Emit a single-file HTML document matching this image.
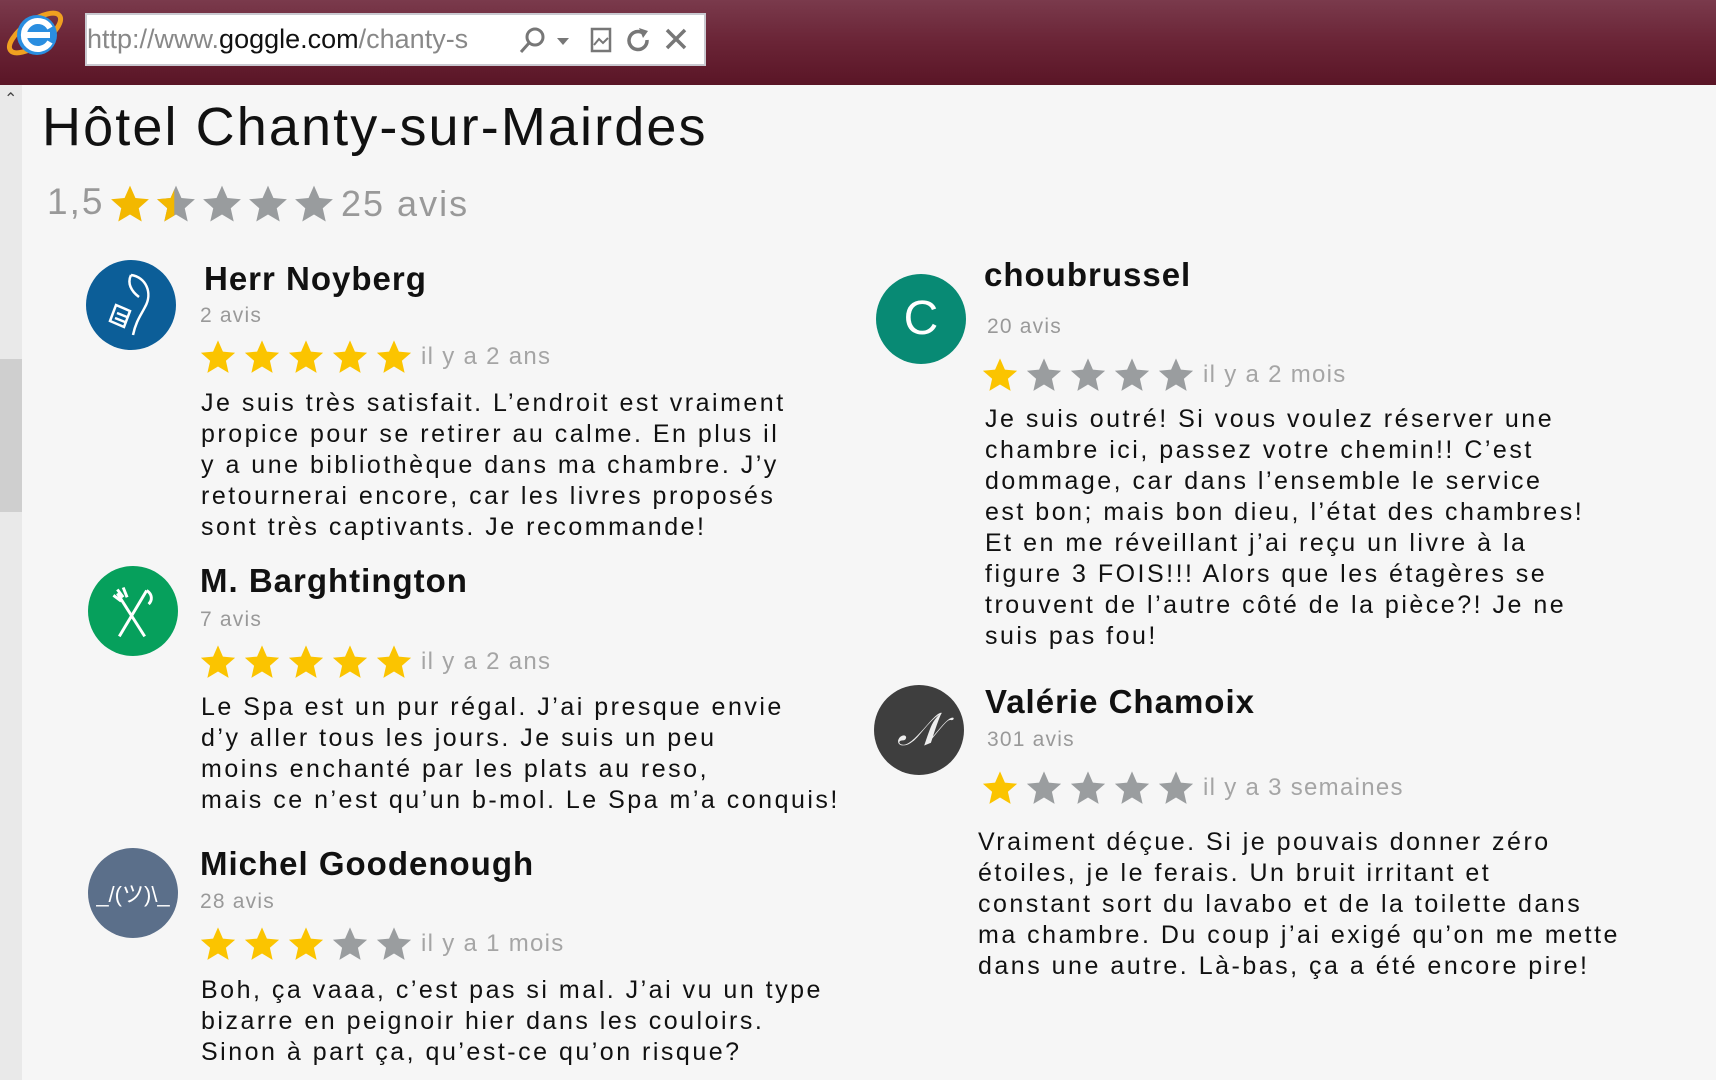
<!DOCTYPE html>
<html><head><meta charset="utf-8"><style>
*{margin:0;padding:0;box-sizing:border-box}
body{width:1716px;height:1080px;overflow:hidden;background:#f6f6f6;font-family:"Liberation Sans",sans-serif;position:relative}
.top{position:absolute;left:0;top:0;width:1716px;height:85px;background:linear-gradient(180deg,#7a3a4c 0%,#6a2436 50%,#5a1526 100%)}
.addr{position:absolute;left:85px;top:13px;width:621px;height:53px;background:#fff;border:2px solid #c9c9d0;font-size:27px;line-height:49px;color:#888;padding-left:0;white-space:nowrap;overflow:hidden}
.addr b{font-weight:normal;color:#111}
.sb{position:absolute;left:0;top:85px;width:22px;height:995px;background:#e9e9e9}
.thumb{position:absolute;left:0;top:274px;width:22px;height:153px;background:#cfcfcf}
.abs{position:absolute;white-space:nowrap}
h1{position:absolute;left:42px;top:96px;font-weight:normal;font-size:54px;letter-spacing:2.1px;color:#111}
.name{font-size:33px;font-weight:bold;letter-spacing:1px;color:#111}
.avis{font-size:21px;color:#999;letter-spacing:1.2px}
.when{font-size:24px;color:#a5a5a5;letter-spacing:1.3px;margin-left:2px}
.txt{font-size:25px;line-height:31px;letter-spacing:2.5px;color:#111}
.stars{display:flex;align-items:center}
.stars svg{margin-right:6px}
.av{position:absolute;border-radius:50%;width:90px;height:90px}
</style></head><body>
<div class="top"></div>
<div class="abs" style="left:4px;top:2px;width:62px;height:62px">
<svg width="62" height="62" viewBox="0 0 62 62"><ellipse cx="31" cy="31" rx="30" ry="12" transform="rotate(-35 31 31)" fill="none" stroke="#f0a020" stroke-width="5"/><circle cx="33" cy="33" r="20" fill="#2a8ee0"/><rect x="20" y="30" width="26" height="6" fill="#fff"/><path d="M46 40a14 14 0 1 1 0-14" fill="none" stroke="#fff" stroke-width="6"/></svg></div>
<div class="addr">http://www.<b>goggle.com</b>/chanty-s
<svg style="position:absolute;left:430px;top:10px" width="200" height="32" viewBox="0 0 200 32"><circle cx="18" cy="12" r="8" fill="none" stroke="#777" stroke-width="3"/><path d="M12 18l-8 9" stroke="#777" stroke-width="3"/><path d="M40 13h12l-6 7z" fill="#777"/><rect x="75" y="4" width="18" height="22" fill="none" stroke="#777" stroke-width="2.5"/><path d="M77 20l5-6 4 4 5-5" stroke="#777" stroke-width="2" fill="none"/><path d="M126 8a9 9 0 1 0 4 7" fill="none" stroke="#777" stroke-width="3.5"/><path d="M122 3l9 3-5 7z" fill="#777"/><path d="M150 5l18 18M168 5l-18 18" stroke="#777" stroke-width="3.5"/></svg></div>
<div class="sb"><div class="thumb"></div><div style="position:absolute;left:4px;top:4px;font-size:16px;color:#444">&#8963;</div></div>

<h1>Hôtel Chanty-sur-Mairdes</h1>
<div class="abs" style="left:47px;top:181px;font-size:37px;color:#999;letter-spacing:2px">1,5</div>
<div class="abs stars" style="left:109px;top:183px">
<svg width="42" height="42" viewBox="0 0 24 24" style="margin-right:4px"><path d="M12 1.5l3.1 7.1 7.7.7-5.8 5.1 1.7 7.6L12 18l-6.7 4 1.7-7.6-5.8-5.1 7.7-.7z" fill="#f3b800"/></svg>
<svg width="42" height="42" viewBox="0 0 24 24" style="margin-right:4px"><defs><clipPath id="h"><rect x="0" y="0" width="11" height="24"/></clipPath></defs><path d="M12 1.5l3.1 7.1 7.7.7-5.8 5.1 1.7 7.6L12 18l-6.7 4 1.7-7.6-5.8-5.1 7.7-.7z" fill="#999c9e"/><path clip-path="url(#h)" d="M12 1.5l3.1 7.1 7.7.7-5.8 5.1 1.7 7.6L12 18l-6.7 4 1.7-7.6-5.8-5.1 7.7-.7z" fill="#f3b800"/></svg>
<svg width="42" height="42" viewBox="0 0 24 24" style="margin-right:4px"><path d="M12 1.5l3.1 7.1 7.7.7-5.8 5.1 1.7 7.6L12 18l-6.7 4 1.7-7.6-5.8-5.1 7.7-.7z" fill="#999c9e"/></svg>
<svg width="42" height="42" viewBox="0 0 24 24" style="margin-right:4px"><path d="M12 1.5l3.1 7.1 7.7.7-5.8 5.1 1.7 7.6L12 18l-6.7 4 1.7-7.6-5.8-5.1 7.7-.7z" fill="#999c9e"/></svg>
<svg width="42" height="42" viewBox="0 0 24 24" style="margin-right:4px"><path d="M12 1.5l3.1 7.1 7.7.7-5.8 5.1 1.7 7.6L12 18l-6.7 4 1.7-7.6-5.8-5.1 7.7-.7z" fill="#999c9e"/></svg>
<span style="font-size:36px;color:#999;letter-spacing:2px;margin-left:2px">25 avis</span></div>

<!-- Review 1 -->
<div class="av" style="left:86px;top:260px;background:#0c5e98"><svg width="90" height="90" viewBox="0 0 90 90" fill="none" stroke="#fff" stroke-width="2.5"><path d="M45 15c15 2 22 18 14 32-4 8-9 14-12 28"/><path d="M45 15c-4 8 0 16 8 22"/><path d="M30 45l14 6-6 16-14-6z"/><path d="M31 53l10 4M29 58l10 4"/></svg></div>
<div class="abs name" style="left:204px;top:260px">Herr Noyberg</div>
<div class="abs avis" style="left:200px;top:304px">2 avis</div>
<div class="abs stars" style="left:199px;top:338px" id="s5a"></div>
<div class="abs txt" style="left:201px;top:388px">Je suis très satisfait. L’endroit est vraiment<br>propice pour se retirer au calme. En plus il<br>y a une bibliothèque dans ma chambre. J’y<br>retournerai encore, car les livres proposés<br>sont très captivants. Je recommande!</div>

<!-- Review 2 -->
<div class="av" style="left:88px;top:566px;background:#06a05c"><svg width="88" height="88" viewBox="0 0 90 90" fill="none" stroke="#fff" stroke-width="3"><path d="M30 28l28 44M60 25l-28 47"/><path d="M26 30l8 6M30 24l6 8M36 22l4 10"/><path d="M60 25c6 4 6 10 2 14"/></svg></div>
<div class="abs name" style="left:200px;top:562px">M. Barghtington</div>
<div class="abs avis" style="left:200px;top:608px">7 avis</div>
<div class="abs stars" style="left:199px;top:643px" id="s5b"></div>
<div class="abs txt" style="left:201px;top:692px">Le Spa est un pur régal. J’ai presque envie<br>d’y aller tous les jours. Je suis un peu<br>moins enchanté par les plats au reso,<br>mais ce n’est qu’un b-mol. Le Spa m’a conquis!</div>

<!-- Review 3 -->
<div class="av" style="left:88px;top:848px;background:#5b6f8a;display:flex;align-items:center;justify-content:center;color:#fff;font-size:22px">&#95;/(ツ)\&#95;</div>
<div class="abs name" style="left:200px;top:845px">Michel Goodenough</div>
<div class="abs avis" style="left:200px;top:890px">28 avis</div>
<div class="abs stars" style="left:199px;top:925px" id="s3"></div>
<div class="abs txt" style="left:201px;top:975px">Boh, ça vaaa, c’est pas si mal. J’ai vu un type<br>bizarre en peignoir hier dans les couloirs.<br>Sinon à part ça, qu’est-ce qu’on risque?</div>

<!-- Review 4 -->
<div class="av" style="left:876px;top:274px;background:#088a74;color:#fff;font-size:48px;text-align:center;line-height:90px">C</div>
<div class="abs name" style="left:984px;top:256px">choubrussel</div>
<div class="abs avis" style="left:987px;top:315px">20 avis</div>
<div class="abs stars" style="left:981px;top:356px" id="s1a"></div>
<div class="abs txt" style="left:985px;top:404px">Je suis outré! Si vous voulez réserver une<br>chambre ici, passez votre chemin!! C’est<br>dommage, car dans l’ensemble le service<br>est bon; mais bon dieu, l’état des chambres!<br>Et en me réveillant j’ai reçu un livre à la<br>figure 3 FOIS!!! Alors que les étagères se<br>trouvent de l’autre côté de la pièce?! Je ne<br>suis pas fou!</div>

<!-- Review 5 -->
<div class="av" style="left:874px;top:685px;background:#3e3e3e;color:#eee;font-family:'Liberation Serif',serif;font-style:italic;font-size:46px;text-align:center;line-height:90px">𝒩</div>
<div class="abs name" style="left:985px;top:683px">Valérie Chamoix</div>
<div class="abs avis" style="left:987px;top:728px">301 avis</div>
<div class="abs stars" style="left:981px;top:769px" id="s1b"></div>
<div class="abs txt" style="left:978px;top:827px">Vraiment déçue. Si je pouvais donner zéro<br>étoiles, je le ferais. Un bruit irritant et<br>constant sort du lavabo et de la toilette dans<br>ma chambre. Du coup j’ai exigé qu’on me mette<br>dans une autre. Là-bas, ça a été encore pire!</div>

<script>
var P='<path d="M12 1.5l3.1 7.1 7.7.7-5.8 5.1 1.7 7.6L12 18l-6.7 4 1.7-7.6-5.8-5.1 7.7-.7z" fill="';
function st(id,n,when){var h='';for(var i=0;i<5;i++)h+='<svg width="38" height="38" viewBox="0 0 24 24">'+P+(i<n?'#fbc400':'#9a9d9f')+'"/></svg>';h+='<span class="when">'+when+'</span>';document.getElementById(id).innerHTML=h;}
st('s5a',5,'il y a 2 ans');st('s5b',5,'il y a 2 ans');st('s3',3,'il y a 1 mois');st('s1a',1,'il y a 2 mois');st('s1b',1,'il y a 3 semaines');
</script>
</body></html>
